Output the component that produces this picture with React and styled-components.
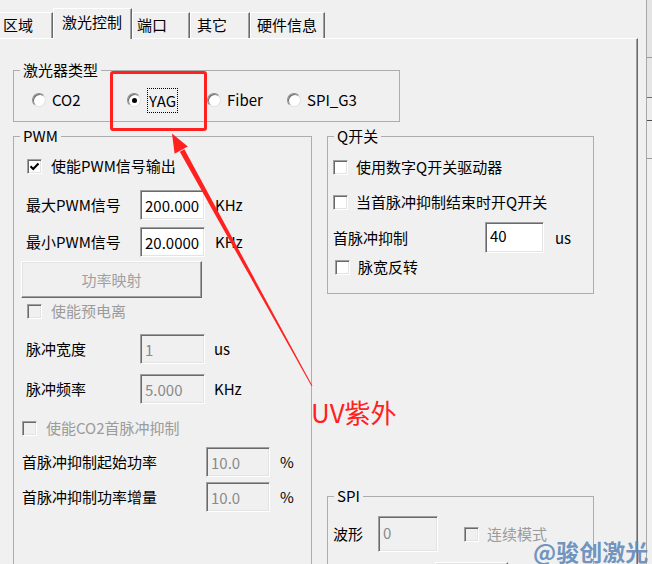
import React from "react";
import styled, { createGlobalStyle } from "styled-components";

const GlobalStyle = createGlobalStyle`
  html, body { margin: 0; padding: 0; background: #f0f0f0; }
  body { font-family: "Noto Sans CJK SC", "Noto Sans", sans-serif; }
`;

const Screen = styled.div`
  position: relative;
  width: 652px;
  height: 564px;
  overflow: hidden;
  display: flex;
  background: #f0f0f0;
  font: 15px/20px "Noto Sans CJK SC", "Noto Sans", sans-serif;
  color: #000;
`;

const Main = styled.div`
  flex: none;
  width: 646px;
  display: flex;
  flex-direction: column;
`;

/* ---------- tabs ---------- */
const TabStrip = styled.div`
  flex: none;
  height: 38px;
  display: flex;
  align-items: flex-end;
`;

const Tab = styled.div`
  flex: none;
  box-sizing: border-box;
  width: ${(p) => p.$w}px;
  height: ${(p) => (p.$active ? 31 : 26)}px;
  margin-left: ${(p) => p.$ml || 0}px;
  padding: ${(p) => (p.$active ? 3 : 2)}px 0 0 ${(p) => p.$pl}px;
  border-top: 1px solid #fff;
  border-left: 1px solid #fff;
  border-right: 1px solid #696969;
  box-shadow: inset -1px 0 #a0a0a0;
  background: #f0f0f0;
  white-space: nowrap;
  ${(p) => p.$active && "margin-bottom: -1px; position: relative; z-index: 1;"}
`;

const Panel = styled.div`
  flex: 1;
  box-sizing: border-box;
  width: 638px;
  border-top: 1px solid #fff;
  border-right: 1px solid #696969;
  box-shadow: inset -1px 0 #a0a0a0;
`;

/* ---------- group boxes ---------- */
const GroupBox = styled.fieldset`
  box-sizing: border-box;
  flex: none;
  margin: ${(p) => p.$mt || 0}px 0 0 ${(p) => p.$ml || 0}px;
  min-width: 0;
  width: ${(p) => p.$w}px;
  ${(p) => (p.$h ? `height: ${p.$h}px;` : "")}
  padding: 0 0 ${(p) => p.$pb || 0}px 0;
  border: 1px solid #adadad;
`;

const Caption = styled.legend`
  margin-left: 6px;
  padding: 0 3px;
  font-size: 15px;
  line-height: 20px;
`;

const Stack = styled.div`
  display: flex;
  flex-direction: column;
  align-items: flex-start;
`;

const Columns = styled.div`
  display: flex;
  align-items: flex-start;
  gap: 15px;
  margin: 4px 0 0 13px;
`;

const RightColumn = styled.div`
  flex: none;
  width: 267px;
  display: flex;
  flex-direction: column;
`;

/* ---------- radio buttons ---------- */
const RadioRow = styled.div`
  display: flex;
  align-items: center;
  height: 20px;
  margin-top: 10px;
  padding-left: 18px;
`;

const RadioItem = styled.label`
  flex: none;
  display: flex;
  align-items: center;
  width: ${(p) => p.$w}px;
`;

const RadioDot = styled.span`
  position: relative;
  flex: none;
  box-sizing: border-box;
  width: 14px;
  height: 14px;
  margin-right: 6px;
  border-radius: 50%;
  background: #fff;
  border: 1px solid;
  border-color: #8c8c8c #e2e2e2 #e2e2e2 #8c8c8c;
  box-shadow: inset 1px 1px 0 #6a6a6a;
  ${(p) =>
    p.$on &&
    `&::after {
      content: "";
      position: absolute;
      left: 4px;
      top: 4px;
      width: 5px;
      height: 5px;
      border-radius: 50%;
      background: #000;
    }`}
`;

const RadioText = styled.span`
  white-space: nowrap;
  ${(p) => (p.$focus ? "border: 1px dotted #000; padding: 2px 1px 1px;" : "")}
`;

/* ---------- checkboxes ---------- */
const CheckRow = styled.label`
  flex: none;
  display: flex;
  align-items: center;
  height: 16px;
  line-height: 16px;
  margin: ${(p) => p.$mt || 0}px 0 0 ${(p) => p.$ml || 0}px;
  color: ${(p) => (p.$disabled ? "#9b9b9b" : "#000")};
  white-space: nowrap;
`;

const CheckBox = styled.span`
  flex: none;
  box-sizing: border-box;
  display: flex;
  align-items: center;
  justify-content: center;
  width: 15px;
  height: 15px;
  margin-right: ${(p) => p.$gap || 9}px;
  border: 1px solid;
  border-color: #a0a0a0 #fff #fff #a0a0a0;
  box-shadow: inset 1px 1px 0 #696969, inset -1px -1px 0 #e3e3e3;
  background: ${(p) => (p.$disabled ? "#f0f0f0" : "#fff")};
`;

function Check({ label, checked, disabled, mt, ml, gap }) {
  return (
    <CheckRow $mt={mt} $ml={ml} $disabled={disabled}>
      <CheckBox $disabled={disabled} $gap={gap}>
        {checked && (
          <svg width="11" height="11" viewBox="0 0 11 11">
            <path d="M1.5 5.2 L4.2 8 L9.5 2.5" fill="none" stroke="#000" strokeWidth="2" />
          </svg>
        )}
      </CheckBox>
      {label}
    </CheckRow>
  );
}

/* ---------- label / edit / unit rows ---------- */
const FieldRow = styled.div`
  flex: none;
  display: flex;
  align-items: center;
  height: ${(p) => p.$h || 30}px;
  margin: ${(p) => p.$mt || 0}px 0 0 ${(p) => p.$ml || 0}px;
`;

const FieldLabel = styled.span`
  flex: none;
  width: ${(p) => p.$w}px;
  white-space: nowrap;
`;

const Edit = styled.input`
  flex: none;
  box-sizing: border-box;
  width: ${(p) => p.$w}px;
  height: 100%;
  margin: 0;
  padding: ${(p) => (p.$top ? "0 0 4px 4px" : "0 0 0 4px")};
  border: 1px solid;
  border-color: #a0a0a0 #fff #fff #a0a0a0;
  box-shadow: inset 1px 1px 0 #696969, inset -1px -1px 0 #e3e3e3;
  background: ${(p) => (p.disabled ? "#f0f0f0" : "#fff")};
  color: ${(p) => (p.disabled ? "#8a8a8a" : "#000")};
  -webkit-text-fill-color: ${(p) => (p.disabled ? "#8a8a8a" : "#000")};
  font: 15px/20px "Noto Sans CJK SC", "Noto Sans", sans-serif;
  outline: none;
`;

const Unit = styled.span`
  flex: none;
  margin-left: ${(p) => p.$ml || 10}px;
`;

const PushButton = styled.button`
  flex: none;
  box-sizing: border-box;
  width: ${(p) => p.$w}px;
  height: ${(p) => p.$h}px;
  margin: ${(p) => p.$mt || 0}px 0 0 ${(p) => p.$ml || 0}px;
  padding: 0;
  border: 1px solid;
  border-color: #fff #696969 #696969 #fff;
  box-shadow: inset -1px -1px 0 #a0a0a0, inset 1px 1px 0 #e3e3e3;
  background: #f0f0f0;
  color: #a0a0a0;
  font: 15px/20px "Noto Sans CJK SC", "Noto Sans", sans-serif;
`;

/* ---------- right-hand window edge ---------- */
const SideStrip = styled.div`
  flex: 1;
  display: flex;
  flex-direction: column;
  border-left: 1px solid #a8a8a8;
`;

const StripCell = styled.div`
  flex: none;
  height: ${(p) => p.$h}px;
  background: ${(p) => p.$bg};
  border-bottom: 1px solid ${(p) => p.$line};
`;

/* ---------- annotations drawn over the dialog ---------- */
const Highlight = styled.div`
  position: absolute;
  left: 110px;
  top: 71px;
  width: 97px;
  height: 60px;
  box-sizing: border-box;
  border: 3px solid #ff2020;
  border-radius: 3px;
  pointer-events: none;
`;

const ArrowLayer = styled.svg`
  position: absolute;
  left: 0;
  top: 0;
  pointer-events: none;
`;

const Callout = styled.div`
  position: absolute;
  left: 311px;
  top: 396px;
  font: 26px/32px "Noto Sans CJK SC", "Noto Sans", sans-serif;
  color: #ff2020;
  white-space: nowrap;
`;

const Watermark = styled.div`
  position: absolute;
  left: 533px;
  top: 541px;
  font: 700 23px/20px "Noto Sans CJK SC", "Noto Sans", sans-serif;
  color: rgba(96, 136, 184, 0.9);
  white-space: nowrap;
`;

const laserTypes = [
  { name: "CO2", w: 95 },
  { name: "YAG", w: 80, on: true },
  { name: "Fiber", w: 80 },
  { name: "SPI_G3", w: 90 },
];

export default function App() {
  return (
    <>
      <GlobalStyle />
      <Screen>
        <Main>
          <TabStrip>
            <Tab $w={59} $ml={-6} $pl={8}>区域</Tab>
            <Tab $w={79} $pl={8} $active>激光控制</Tab>
            <Tab $w={58} $pl={4}>端口</Tab>
            <Tab $w={60} $pl={6}>其它</Tab>
            <Tab $w={75} $pl={6}>硬件信息</Tab>
          </TabStrip>

          <Panel>
            <GroupBox $mt={21} $ml={13} $w={387} $pb={11}>
              <Caption>激光器类型</Caption>
              <RadioRow>
                {laserTypes.map((t) => (
                  <RadioItem key={t.name} $w={t.w}>
                    <RadioDot $on={t.on} />
                    <RadioText $focus={t.on}>{t.name}</RadioText>
                  </RadioItem>
                ))}
              </RadioRow>
            </GroupBox>

            <Columns>
              <GroupBox $w={299} $h={470}>
                <Caption>PWM</Caption>
                <Stack>
                  <Check label="使能PWM信号输出" checked mt={12} ml={13} />
                  <FieldRow $mt={16} $ml={12}>
                    <FieldLabel $w={114}>最大PWM信号</FieldLabel>
                    <Edit $w={65} readOnly value="200.000" />
                    <Unit $ml={10}>KHz</Unit>
                  </FieldRow>
                  <FieldRow $mt={7} $ml={12}>
                    <FieldLabel $w={114}>最小PWM信号</FieldLabel>
                    <Edit $w={65} readOnly value="20.0000" />
                    <Unit $ml={10}>KHz</Unit>
                  </FieldRow>
                  <PushButton $w={181} $h={37} $mt={4} $ml={7} disabled>
                    功率映射
                  </PushButton>
                  <Check label="使能预电离" disabled mt={5} ml={13} />
                  <FieldRow $mt={15} $ml={12}>
                    <FieldLabel $w={114}>脉冲宽度</FieldLabel>
                    <Edit $w={65} readOnly disabled value="1" />
                    <Unit $ml={9}>us</Unit>
                  </FieldRow>
                  <FieldRow $mt={10} $ml={12}>
                    <FieldLabel $w={114}>脉冲频率</FieldLabel>
                    <Edit $w={65} readOnly disabled value="5.000" />
                    <Unit $ml={9}>KHz</Unit>
                  </FieldRow>
                  <Check label="使能CO2首脉冲抑制" disabled mt={16} ml={8} />
                  <FieldRow $mt={11} $ml={8}>
                    <FieldLabel $w={184}>首脉冲抑制起始功率</FieldLabel>
                    <Edit $w={64} readOnly disabled value="10.0" />
                    <Unit $ml={10}>%</Unit>
                  </FieldRow>
                  <FieldRow $mt={5} $ml={8}>
                    <FieldLabel $w={184}>首脉冲抑制功率增量</FieldLabel>
                    <Edit $w={64} readOnly disabled value="10.0" />
                    <Unit $ml={10}>%</Unit>
                  </FieldRow>
                </Stack>
              </GroupBox>

              <RightColumn>
                <GroupBox $w={267} $h={168}>
                  <Caption>Q开关</Caption>
                  <Stack>
                    <Check label="使用数字Q开关驱动器" mt={13} ml={5} gap={8} />
                    <Check label="当首脉冲抑制结束时开Q开关" mt={19} ml={5} gap={8} />
                    <FieldRow $h={31} $mt={12} $ml={5}>
                      <FieldLabel $w={152}>首脉冲抑制</FieldLabel>
                      <Edit $w={59} $top readOnly value="40" />
                      <Unit $ml={11}>us</Unit>
                    </FieldRow>
                    <Check label="脉宽反转" mt={6} ml={7} gap={8} />
                  </Stack>
                </GroupBox>

                <GroupBox $mt={192} $w={267} $h={120}>
                  <Caption>SPI</Caption>
                  <Stack>
                    <FieldRow $h={36} $mt={10} $ml={5}>
                      <FieldLabel $w={45}>波形</FieldLabel>
                      <Edit $w={60} $top readOnly disabled value="0" />
                      <Check label="连续模式" disabled ml={26} gap={8} />
                    </FieldRow>
                    <PushButton $w={73} $h={30} $mt={10} $ml={107} disabled />
                  </Stack>
                </GroupBox>
              </RightColumn>
            </Columns>
          </Panel>
        </Main>

        <SideStrip>
          <StripCell $h={57} $bg="#e4e4e4" $line="#9c9c9c" />
          <StripCell $h={39} $bg="#e6e6e6" $line="#6e6e6e" />
          <StripCell $h={22} $bg="#ececec" $line="#4e4e4e" />
          <StripCell $h={37} $bg="#eeeeee" $line="#9c9c9c" />
        </SideStrip>

        <Highlight />
        <ArrowLayer width="652" height="564" viewBox="0 0 652 564">
          <polygon points="184.4,149.3 312.4,385.8 311.6,386.2 179.8,151.8" fill="#ff2020" />
          <polygon points="172,133.5 187.8,146.5 174.6,153.7" fill="#ff2020" />
        </ArrowLayer>
        <Callout>UV紫外</Callout>
        <Watermark>@骏创激光</Watermark>
      </Screen>
    </>
  );
}
